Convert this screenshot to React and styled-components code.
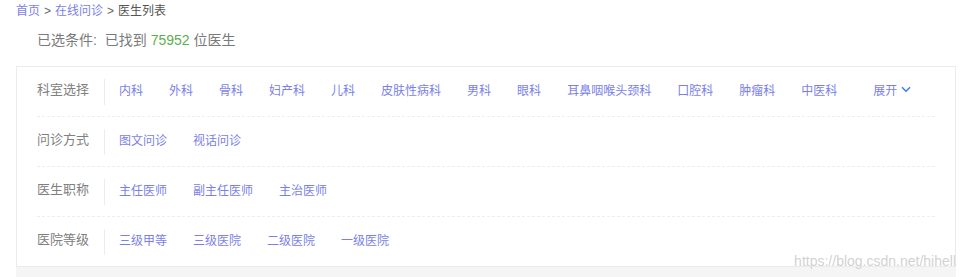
import React from "react";
import styled, { createGlobalStyle } from "styled-components";

const Global = createGlobalStyle`
  html, body { margin: 0; padding: 0; background: #fff; }
  body { font-family: "Liberation Sans", "Noto Sans CJK SC", sans-serif; }
`;

const Page = styled.div`
  position: relative;
  width: 964px;
  height: 277px;
  overflow: hidden;
`;

const Crumbs = styled.div`
  padding: 3px 0 0 16px;
  font-size: 12px;
  line-height: 16px;
  color: #555;
`;

const CrumbLink = styled.a`
  color: #7b7fe8;
  text-decoration: none;
`;

const Sep = styled.span`
  color: #666;
  margin: 0 4px;
`;

const Summary = styled.div`
  padding: 11px 0 0 37px;
  font-size: 14px;
  line-height: 20px;
  color: #7a7a7a;
  height: 47px;
  box-sizing: border-box;
`;

const Count = styled.span`
  color: #5bb04f;
  margin: 0 4px;
`;

const Panel = styled.div`
  margin-left: 16px;
  width: 940px;
  box-sizing: border-box;
  border: 1px solid #ebebeb;
  background: #fff;
  padding: 0 20px;
`;

const Row = styled.div`
  display: flex;
  align-items: center;
  height: ${(p) => (p.$last ? "49px" : "50px")};
  box-sizing: border-box;
  border-bottom: ${(p) => (p.$last ? "none" : "1px dashed #eeeeee")};
`;

const Label = styled.div`
  width: 68px;
  flex: none;
  font-size: 13px;
  color: #808080;
  line-height: 22px;
  padding-bottom: 4px;
  border-right: 1px solid #ececec;
  box-sizing: border-box;
  height: 26px;
`;

const Items = styled.div`
  display: flex;
  align-items: center;
  gap: 26px;
  padding: 0 0 4px 14px;
  flex: 1;
`;

const Item = styled.a`
  font-size: 12px;
  color: #7b7fe8;
  text-decoration: none;
  white-space: nowrap;
  cursor: pointer;
`;

const Expand = styled(Item)`
  margin-left: 10px;
  display: inline-flex;
  align-items: center;
  gap: 4px;
`;

const Band = styled.div`
  margin-left: 16px;
  width: 940px;
  height: 12px;
  background: #f5f5f5;
`;

const Watermark = styled.div`
  position: absolute;
  right: 8px;
  top: 253px;
  font-family: "Liberation Sans", Arial, sans-serif;
  font-size: 14px;
  color: #d2d2d2;
  text-shadow: 0 0 1px #fff;
  pointer-events: none;
`;

const rows = [
  {
    label: "科室选择",
    items: ["内科", "外科", "骨科", "妇产科", "儿科", "皮肤性病科", "男科", "眼科", "耳鼻咽喉头颈科", "口腔科", "肿瘤科", "中医科"],
    expand: true,
  },
  { label: "问诊方式", items: ["图文问诊", "视话问诊"] },
  { label: "医生职称", items: ["主任医师", "副主任医师", "主治医师"] },
  { label: "医院等级", items: ["三级甲等", "三级医院", "二级医院", "一级医院"] },
];

const Chevron = () => (
  <svg width="10" height="7" viewBox="0 0 10 7">
    <path d="M1 1.2 L5 5.2 L9 1.2" fill="none" stroke="#3b7cf0" strokeWidth="1.5" />
  </svg>
);

export default function App() {
  return (
    <Page>
      <Global />
      <Crumbs>
        <CrumbLink>首页</CrumbLink>
        <Sep>&gt;</Sep>
        <CrumbLink>在线问诊</CrumbLink>
        <Sep>&gt;</Sep>
        <span>医生列表</span>
      </Crumbs>
      <Summary>
        已选条件:&nbsp;&nbsp;已找到<Count>75952</Count>位医生
      </Summary>
      <Panel>
        {rows.map((r, i) => (
          <Row key={r.label} $last={i === rows.length - 1}>
            <Label>{r.label}</Label>
            <Items>
              {r.items.map((it) => (
                <Item key={it}>{it}</Item>
              ))}
              {r.expand && (
                <Expand>
                  展开 <Chevron />
                </Expand>
              )}
            </Items>
          </Row>
        ))}
      </Panel>
      <Band />
      <Watermark>https://blog.csdn.net/hihell</Watermark>
    </Page>
  );
}
